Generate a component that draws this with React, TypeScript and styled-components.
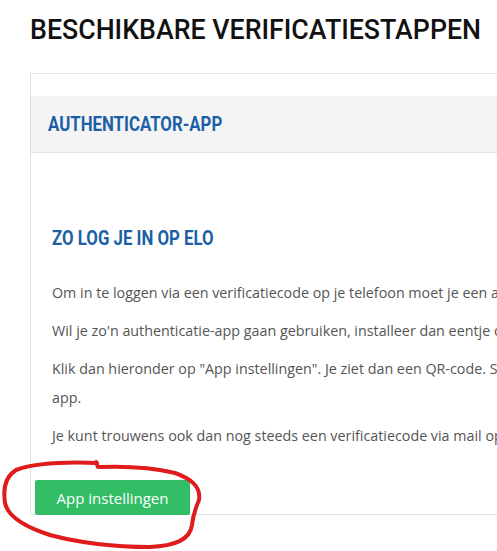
import styled, { createGlobalStyle } from "styled-components";

const GlobalStyle = createGlobalStyle`
  html, body {
    margin: 0;
    padding: 0;
    background: #ffffff;
    overflow: hidden;
  }
  body {
    width: 497px;
    height: 551px;
    position: relative;
  }
`;

const Page = styled.div`
  position: relative;
  padding: 12px 0 0 30px;
  width: 497px;
  height: 551px;
  box-sizing: border-box;
  overflow: hidden;
`;

const PageTitle = styled.h1`
  margin: 0;
  font-family: Roboto, "Liberation Sans", sans-serif;
  font-weight: 500;
  font-size: 28px;
  line-height: 36px;
  color: #111111;
  white-space: nowrap;
  transform-origin: left center;
  transform: scaleX(0.955);
`;

const Card = styled.div`
  margin-top: 25px;
  width: 620px;
  border: 1px solid #e2e2e2;
  border-right: none;
  padding-top: 22px;
  box-sizing: border-box;
`;

const CardHeader = styled.div`
  background: #f4f4f4;
  border-bottom: 1px solid #e2e2e2;
  height: 56px;
  display: flex;
  align-items: center;
  padding-left: 17px;
`;

const BlueTitle = styled.h2`
  margin: 0;
  font-family: Roboto, "Liberation Sans", sans-serif;
  font-weight: 700;
  font-size: 20px;
  color: #1d5fa6;
  white-space: nowrap;
  transform-origin: left center;
  transform: scaleX(0.84);
`;

const CardBody = styled.div`
  padding: 73px 0 0 21px;
`;

const Paragraphs = styled.div`
  margin-top: 28px;
`;

const Text = styled.p`
  margin: 0 0 9px;
  font-family: "Open Sans", "Liberation Sans", sans-serif;
  font-size: 14.3px;
  line-height: 29px;
  color: #555555;
  white-space: nowrap;
`;

const Wrapped = styled.span`
  display: block;
`;

const Button = styled.button`
  display: block;
  margin: 30px 0 -1px 4px;
  height: 35px;
  width: 155px;
  border: none;
  border-radius: 2px;
  background: #33be66;
  color: #ffffff;
  font-family: "Open Sans", "Liberation Sans", sans-serif;
  font-size: 15px;
  padding: 0;
  cursor: pointer;
`;

const Scribble = styled.svg`
  position: absolute;
  left: 0;
  top: 455px;
  pointer-events: none;
`;

export default function App() {
  return (
    <>
      <GlobalStyle />
      <Page>
        <PageTitle>BESCHIKBARE VERIFICATIESTAPPEN</PageTitle>
        <Card>
          <CardHeader>
            <BlueTitle>AUTHENTICATOR-APP</BlueTitle>
          </CardHeader>
          <CardBody>
            <BlueTitle>ZO LOG JE IN OP ELO</BlueTitle>
            <Paragraphs>
              <Text>
                Om in te loggen via een verificatiecode op je telefoon moet je een authenticatie-app hebben.
              </Text>
              <Text>
                Wil je zo'n authenticatie-app gaan gebruiken, installeer dan eentje op je telefoon.
              </Text>
              <Text>
                <Wrapped>
                  Klik dan hieronder op "App instellingen". Je ziet dan een QR-code. Scan deze met de
                </Wrapped>
                <Wrapped>app.</Wrapped>
              </Text>
              <Text>
                Je kunt trouwens ook dan nog steeds een verificatiecode via mail opvragen.
              </Text>
            </Paragraphs>
          </CardBody>
          <Button>App instellingen</Button>
        </Card>
        <Scribble width="210" height="96" viewBox="0 0 210 96">
          <path
            d="M97 8 C70 7 35 8 16 15 C5 22 3 35 5 48 C8 62 25 72 50 80 C80 88 115 92 150 92 C175 91 190 85 192 70 C193 60 196 52 199 45 C201 32 192 24 175 18 C150 12 125 11 100 12"
            fill="none"
            stroke="#e01b1b"
            strokeWidth="4"
            strokeLinecap="round"
          />
          <path d="M96 7 L98 12" stroke="#e01b1b" strokeWidth="4" strokeLinecap="round" />
        </Scribble>
      </Page>
    </>
  );
}
